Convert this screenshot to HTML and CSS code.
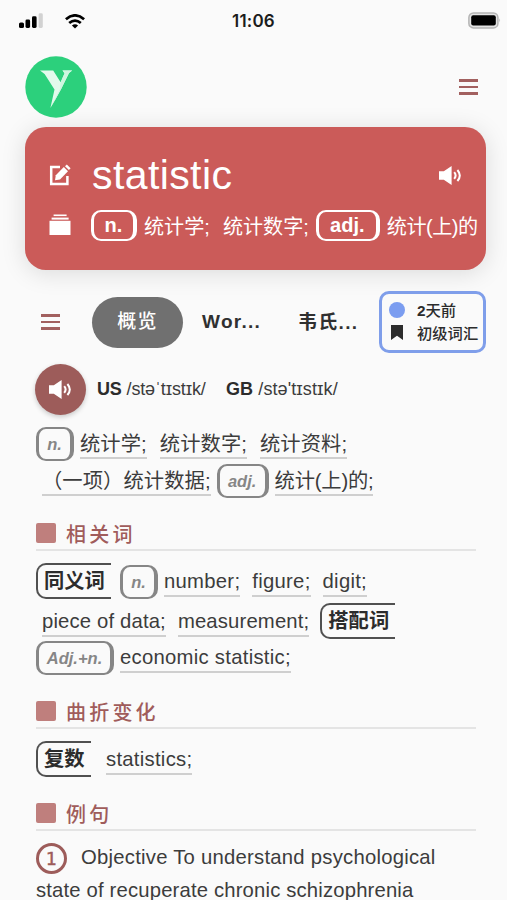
FILE: index.html
```
<!DOCTYPE html>
<html lang="zh-CN">
<head>
  <meta charset="UTF-8">
  <meta name="viewport" content="width=device-width, initial-scale=1.0">
  <title>statistic</title>
  <link rel="stylesheet" href="styles.css">
</head>
<body>
  <div class="status-bar">
    <div class="status-left">
      <svg class="signal" width="25" height="16" viewBox="0 0 25 16">
        <rect x="0" y="9.5" width="5" height="5.5" rx="1.6"/>
        <rect x="6.5" y="6.5" width="4.6" height="8.5" rx="1.4"/>
        <rect x="13" y="3.3" width="4.6" height="11.7" rx="1.4"/>
        <rect x="19.6" y="0.3" width="4.2" height="14.7" rx="1.4" fill="#d2d2d2"/>
      </svg>
      <svg class="wifi" width="20" height="15" viewBox="0 0 20 15">
        <g fill="none" stroke="#000" stroke-width="2.8">
          <path d="M0.9 5.2Q10 -2.4 19.1 5.2"/>
          <path d="M4.2 9Q10 4.2 15.8 9"/>
        </g>
        <path d="M6.9 11.6Q10 9 13.1 11.6L10 14.6Z"/>
      </svg>
    </div>
    <div class="clock">11:06</div>
    <svg class="battery" width="34" height="17" viewBox="0 0 34 17">
      <rect x="0.9" y="0.9" width="29" height="15" rx="4.5" fill="#e4e4e4" stroke="#b4b4b4" stroke-width="1.5"/>
      <rect x="3.2" y="3.2" width="24.6" height="10.4" rx="2"/>
      <path d="M31.4 6.2Q33.2 8.3 31.4 10.4Z" fill="#b4b4b4"/>
    </svg>
  </div>

  <header class="header">
    <svg class="logo" width="62" height="62" viewBox="0 0 62 62">
      <circle cx="31" cy="31" r="30.7" fill="#2cd07c"/>
      <path d="M15 14.6H28.2L35.6 26.2L39.6 17.3L37.5 14.6H47.2L44 17L36 33.2Q31 42.5 25.4 52L29.5 33.4L19.6 18Z" fill="#e2faec"/>
      <path d="M35.6 26.2L39.6 17.3L37.5 14.6H47.2L44 17L36 33.2Q31 42.5 25.4 52L35 33Z" fill="#cdf6df"/>
    </svg>
    <div class="burger"><span></span><span></span><span></span></div>
  </header>

  <div class="card">
    <div class="card-row card-title">
      <svg class="card-icon" width="22" height="22" viewBox="0 0 22 22">
        <path d="M11 3H2.2V20H18.4V12" fill="none" stroke="#fff" stroke-width="2.5"/>
        <path d="M6 16.2L6.8 11.2L14.8 3L19 7.2L11 15.4Z" fill="#fff"/>
        <path d="M16 2.3L17.8 0.5L21.6 4.2L19.9 6Z" fill="#fff"/>
      </svg>
      <h1>statistic</h1>
      <svg class="card-sound" width="23" height="19" viewBox="0 0 23 19">
        <path d="M0 5.2H4.8L12.6 0V19L4.8 13.8H0Z" fill="#fff"/>
        <path d="M15.2 6.2Q18 9.5 15.2 12.8M18.4 4Q23.2 9.5 18.4 15" fill="none" stroke="#fff" stroke-width="2"/>
      </svg>
    </div>
    <div class="card-row card-meaning">
      <svg class="card-icon" width="22" height="22" viewBox="0 0 22 22" fill="#fff">
        <rect x="4.6" y="0.5" width="13" height="1.6"/>
        <rect x="2.6" y="3.6" width="17" height="2"/>
        <rect x="0.5" y="6.8" width="21" height="14.2"/>
      </svg>
      <div class="meaning-line">
        <span class="tag tag-light">n.</span>
        <span class="light-first">统计学;</span>
        <span class="light-second">统计数字;</span>
        <span class="tag tag-light tag-wide">adj.</span>
        <span class="light-first light-last">统计(上)的</span>
      </div>
    </div>
  </div>

  <nav class="tabs">
    <div class="burger"><span></span><span></span><span></span></div>
    <div class="tab tab-active">概览</div>
    <div class="tab tab-wor">Wor...</div>
    <div class="tab tab-wei">韦氏...</div>
    <div class="level">
      <div class="level-row"><span class="dot"></span><span><b>2</b>天前</span></div>
      <div class="level-row">
        <svg class="bookmark" width="12" height="15" viewBox="0 0 12 15"><path d="M0 0H12V15L6 10.8L0 15Z" fill="#2c2c2c"/></svg>
        <span>初级词汇</span>
      </div>
    </div>
  </nav>

  <main class="content">
    <div class="phonetic">
      <div class="play">
        <svg width="23" height="19" viewBox="0 0 23 19">
          <path d="M0 5.2H4.8L12.6 0V19L4.8 13.8H0Z" fill="#fff"/>
          <path d="M15.2 6.2Q18 9.5 15.2 12.8M18.4 4Q23.2 9.5 18.4 15" fill="none" stroke="#fff" stroke-width="2"/>
        </svg>
      </div>
      <div class="us"><b>US</b> /stəˈtɪstɪk/</div>
      <div class="gb"><b>GB</b> /stə'tɪstɪk/</div>
    </div>

    <div class="row row-cjk row-meaning">
      <span class="tag tag-n">n.</span>
      <span class="term">统计学;</span>
      <span class="term">统计数字;</span>
      <span class="term">统计资料;</span>
    </div>
    <div class="row row-cjk row-second">
      <span class="term">（一项）统计数据;</span>
      <span class="tag tag-adj">adj.</span>
      <span class="term term-tight">统计(上)的;</span>
    </div>

    <h2 class="section-title title-related">相关词</h2>
    <div class="row row-label">
      <span class="label">同义词</span>
      <span class="tag tag-n">n.</span>
      <span class="term">number;</span>
      <span class="term">figure;</span>
      <span class="term">digit;</span>
    </div>
    <div class="row row-label row-third">
      <span class="term">piece of data;</span>
      <span class="term">measurement;</span>
      <span class="label label-after">搭配词</span>
    </div>
    <div class="row row-collocation">
      <span class="tag tag-adjn">Adj.+n.</span>
      <span class="term">economic statistic;</span>
    </div>

    <h2 class="section-title title-forms">曲折变化</h2>
    <div class="row row-label">
      <span class="label label-short">复数</span>
      <span class="term">statistics;</span>
    </div>

    <h2 class="section-title title-examples">例句</h2>
    <div class="example">
      <span class="number">1</span>
      <p class="example-first">Objective To understand psychological</p>
    </div>
    <p class="example-rest">state of recuperate chronic schizophrenia</p>
  </main>
</body>
</html>
```

FILE: styles.css
```
* {
  box-sizing: border-box;
}
body {
  margin: 0;
  width: 507px;
  height: 900px;
  overflow: hidden;
  background-color: #fafafa;
  color: #3c3c3c;
  font-family: "Liberation Sans", "Noto Sans CJK SC", sans-serif;
}
h1, h2, p {
  margin: 0;
  font-weight: 400;
}
svg {
  display: block;
  flex: none;
}

/* status bar */
.status-bar {
  display: grid;
  grid-template-columns: 1fr auto 1fr;
  align-items: center;
  height: 42px;
  padding: 0 5px 0 19px;
}
.status-left {
  display: flex;
  align-items: center;
  gap: 21px;
}
.clock {
  font-family: Inter, "Liberation Sans", sans-serif;
  font-size: 17px;
  font-weight: 600;
  letter-spacing: 0.2px;
  color: #1c1c1c;
  margin-right: 14px;
}
.battery {
  justify-self: end;
  margin-top: -1px;
}

/* logo and menu */
.header {
  display: flex;
  justify-content: space-between;
  height: 85px;
  padding: 14px 29px 0 25px;
}
.burger {
  display: flex;
  flex-direction: column;
  gap: 4px;
}
.burger span {
  width: 19px;
  height: 2.5px;
  background-color: #a2605f;
}
.header .burger {
  margin-top: 23px;
}

/* word card */
.card {
  width: 461px;
  height: 143px;
  margin-left: 25px;
  padding: 21px 8px 0 23px;
  border-radius: 21px;
  background-color: #cb5b59;
  box-shadow: 0 3px 24px rgba(0, 0, 0, 0.13);
  color: #fff;
}
.card-row {
  display: flex;
  align-items: center;
}
.card-icon {
  margin-left: 1px;
}
.card-title {
  height: 54px;
}
.card-title h1 {
  margin-left: 21px;
  font-size: 41px;
  letter-spacing: 0.4px;
}
.card-sound {
  margin-left: auto;
  margin-right: 16px;
}
.card-meaning {
  height: 46px;
}
.meaning-line {
  display: flex;
  align-items: center;
  margin-left: 20px;
  font-size: 20.1px;
  white-space: nowrap;
}
.light-first {
  margin-left: 7px;
}
.light-second {
  margin-left: 13px;
  margin-right: 7px;
}
.light-last {
  letter-spacing: -0.5px;
}

/* tabs */
.tabs {
  display: flex;
  align-items: center;
  height: 62px;
  margin-top: 21px;
  padding-left: 41px;
}
.tab {
  font-size: 19px;
  font-weight: 700;
  letter-spacing: 1.3px;
  color: #303030;
  white-space: nowrap;
}
.tab-active {
  width: 91px;
  height: 51px;
  line-height: 50px;
  margin-left: 32px;
  border-radius: 26px;
  background-color: #707070;
  color: #fff;
  font-weight: 500;
  text-align: center;
}
.tab-wor {
  width: 60px;
  margin-left: 19px;
}
.tab-wei {
  width: 60px;
  margin-left: 36px;
  margin-top: -3px;
}
.level {
  display: flex;
  flex-direction: column;
  justify-content: center;
  width: 107px;
  height: 62px;
  margin-left: 21px;
  padding: 0 0 2px 7px;
  border: 3px solid #7f9eea;
  border-radius: 10px;
  color: #2c2c2c;
  font-size: 15.3px;
  font-weight: 500;
}
.level-row {
  display: flex;
  align-items: center;
  height: 23px;
  white-space: nowrap;
}
.level-row span:last-child {
  margin-top: -2px;
}
.dot {
  width: 16px;
  height: 16px;
  margin-right: 12px;
  border-radius: 50%;
  background-color: #7b9df0;
}
.bookmark {
  margin: 0 14px 0 2px;
}

/* pronunciation */
.content {
  padding: 0 31px 0 36px;
}
.phonetic {
  display: flex;
  align-items: center;
  height: 52px;
  margin-top: 10px;
  font-size: 18px;
  white-space: nowrap;
}
.phonetic b {
  color: #2c2c2c;
}
.play {
  display: flex;
  align-items: center;
  justify-content: center;
  width: 51px;
  height: 51px;
  margin-left: -1px;
  border-radius: 50%;
  background-color: #9d5c5a;
  box-shadow: 0 2px 5px rgba(0, 0, 0, 0.2);
}
.us {
  width: 109px;
  margin-left: 11px;
  letter-spacing: -0.15px;
}
.gb {
  margin-left: 20px;
  letter-spacing: 0.1px;
}

/* word rows */
.row {
  display: flex;
  align-items: flex-end;
  height: 34px;
  font-size: 20.3px;
  letter-spacing: 0.27px;
  white-space: nowrap;
}
.row-cjk {
  letter-spacing: 0.08px;
}
.row-meaning {
  margin-top: 12px;
}
.row-meaning .term + .term {
  margin-left: 7px;
}
.row-second {
  margin-top: 3px;
}
.row-label {
  height: 36px;
}
.row-third {
  margin-top: 4px;
  letter-spacing: 0.15px;
}
.row-collocation {
  margin-top: 2px;
}
.term {
  height: 30px;
  line-height: 29px;
  margin: 0 6px 2px;
  border-bottom: 2px solid #cfcfcf;
}
.row-cjk .term {
  line-height: 30px;
}
.term-tight {
  letter-spacing: -0.2px;
}
.tag {
  display: inline-flex;
  align-items: center;
  justify-content: center;
  height: 34px;
  border: 2px solid #868686;
  border-left-width: 3px;
  border-right-width: 4px;
  border-radius: 10px;
  color: #868686;
  font-size: 16.5px;
  font-style: italic;
  font-weight: 700;
  letter-spacing: 0;
}
.tag-n {
  width: 38px;
}
.tag-adj {
  width: 52px;
}
.tag-adjn {
  width: 78px;
}
.tag-light {
  width: 46px;
  height: 31px;
  border-color: #fff;
  color: #fff;
  font-size: 20px;
  font-style: normal;
}
.tag-wide {
  width: 64px;
}
.label {
  width: 75px;
  height: 36px;
  line-height: 32px;
  margin-right: 9px;
  padding-left: 6px;
  border: 2px solid #505050;
  border-right: none;
  border-radius: 10px 0 0 10px;
  color: #2c2c2c;
  font-weight: 600;
  letter-spacing: 0;
}
.label-after {
  margin-left: 5px;
}
.label-short {
  width: 55px;
}

/* section headings */
.section-title {
  display: flex;
  align-items: center;
  height: 34px;
  border-bottom: 2px solid #e4e4e4;
  color: #a05c5b;
  font-size: 20px;
  font-weight: 500;
  letter-spacing: 3.2px;
}
.section-title::before {
  content: "";
  width: 20px;
  height: 20px;
  margin-right: 10px;
  border-radius: 2px;
  background-color: #bf7f7d;
}
.title-related {
  margin: 19px 0 12px;
}
.title-forms,
.title-examples {
  margin: 20px 0 12px;
}

/* examples */
.example {
  display: flex;
  align-items: center;
  height: 31px;
}
.number {
  display: flex;
  align-items: center;
  justify-content: center;
  width: 31px;
  height: 31px;
  border: 3px solid #9d5c5a;
  border-radius: 50%;
  color: #9d5c5a;
  font-family: "DejaVu Sans", sans-serif;
  font-size: 17px;
  -webkit-text-stroke: 0.5px #9d5c5a;
}
.example-first {
  margin-left: 14px;
  margin-top: -2px;
  font-size: 20.3px;
  letter-spacing: 0.24px;
  white-space: nowrap;
}
.example-rest {
  margin-top: 5px;
  font-size: 20.3px;
  letter-spacing: 0.16px;
  white-space: nowrap;
}
```
